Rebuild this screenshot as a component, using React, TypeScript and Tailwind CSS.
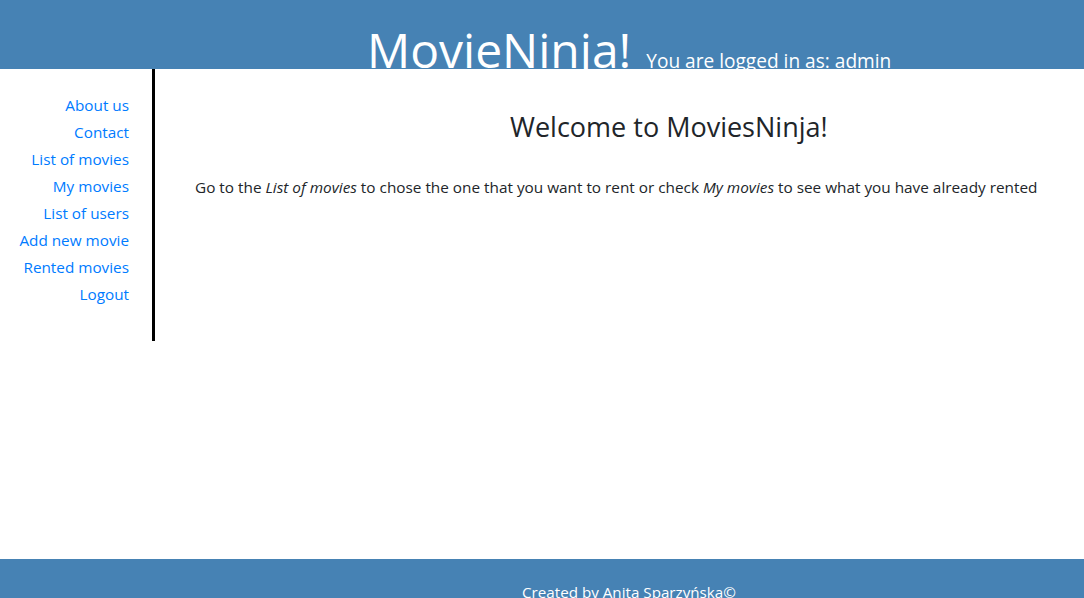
import React from "react";

const links = [
  "About us",
  "Contact",
  "List of movies",
  "My movies",
  "List of users",
  "Add new movie",
  "Rented movies",
  "Logout",
];

export default function App() {
  return (
    <div
      className="flex h-[598px] flex-col overflow-hidden bg-white text-[#212529]"
      style={{ fontFamily: '"Open Sans", "Noto Sans", sans-serif' }}
    >
      <header className="flex h-[69px] shrink-0 items-end overflow-hidden bg-[#4682b4] pl-[367px] text-white">
        <h1 className="translate-y-[5px] text-[48px] leading-none font-normal">
          MovieNinja!
        </h1>
        <span className="ml-[15px] translate-y-[2px] text-[19.1px] leading-none">
          You are logged in as: admin
        </span>
      </header>

      <div className="flex flex-1">
        <nav className="h-[272px] w-[155px] shrink-0 border-r-[3px] border-black pt-[23px] pr-[23px] text-right">
          {links.map((l) => (
            <a
              key={l}
              href="#"
              className="block text-[15.3px] leading-[27px] text-[#007bff]"
            >
              {l}
            </a>
          ))}
        </nav>

        <main className="flex-1 pt-[44px]">
          <h3 className="ml-[355px] text-[27px] leading-none font-normal">
            Welcome to MoviesNinja!
          </h3>
          <p className="mt-[36px] ml-[40px] whitespace-nowrap text-[15.33px]">
            Go to the <i>List of movies</i> to chose the one that you want to
            rent or check <i>My movies</i> to see what you have already rented
          </p>
        </main>
      </div>

      <footer className="flex h-[39px] shrink-0 items-end justify-start overflow-hidden bg-[#4682b4] pl-[522px] text-white">
        <span className="translate-y-[6px] text-[15.2px]">
          Created by Anita Sparzyńska©
        </span>
      </footer>
    </div>
  );
}
